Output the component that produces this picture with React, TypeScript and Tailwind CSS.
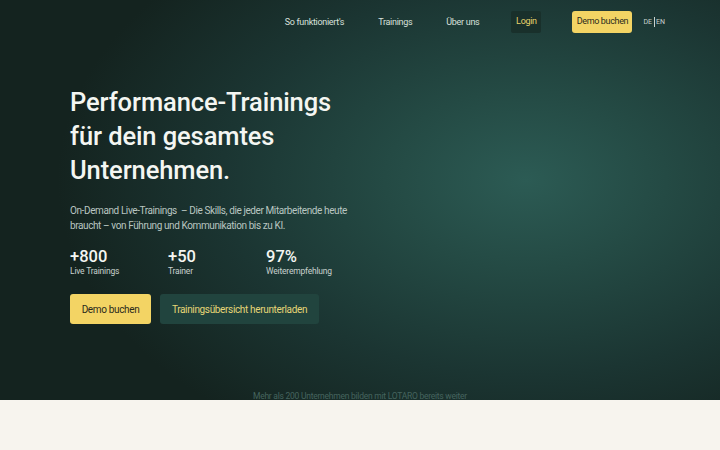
const navLinks = ["So funktioniert's", 'Trainings', 'Über uns'];

const stats = [
  { value: '+800', label: 'Live Trainings' },
  { value: '+50', label: 'Trainer' },
  { value: '97%', label: 'Weiterempfehlung' },
];

export default function App() {
  return (
    <div className="min-h-screen bg-[#f7f4ee] font-['Roboto',sans-serif]">
      <section className="relative h-[400px] bg-[radial-gradient(ellipse_65%_75%_at_73%_45%,#2c5b54_0%,#244a44_30%,#1b3532_65%,#14231f_100%)]">
        <nav className="flex items-center justify-end pr-[55px] pt-[11px]">
          <div className="flex items-center gap-[34px] text-[9px] tracking-[-0.3px] text-[#d8e0dc]">
            {navLinks.map((link) => (
              <a key={link} className="leading-none">
                {link}
              </a>
            ))}
          </div>
          <a className="ml-[32px] flex h-[22px] w-[30px] items-center justify-center rounded-[2px] bg-[#19302b] text-[9px] tracking-[-0.3px] text-[#e7d36a]">
            Login
          </a>
          <a className="ml-[31px] flex h-[22px] w-[60px] items-center justify-center rounded-[3px] bg-[#f3d464] text-[9px] tracking-[-0.35px] text-[#2a2a1c]">
            Demo buchen
          </a>
          <div className="ml-[11px] flex items-center text-[7px] text-[#c9d2ce]">
            <span>DE</span>
            <span className="mx-[1.5px] h-[10px] w-px bg-[#c9d2ce]" />
            <span>EN</span>
          </div>
        </nav>

        <div className="pl-[70px] pt-[52px]">
          <h1 className="text-[25.5px] font-medium leading-[34px] tracking-[-0.1px] text-[#f4f6f2]">
            Performance-Trainings
            <br />
            für dein gesamtes
            <br />
            Unternehmen.
          </h1>
          <p className="mt-[16px] whitespace-nowrap text-[10px] leading-[15px] tracking-[-0.4px] text-[#b9c6c1]">
            On-Demand Live-Trainings &nbsp;– Die Skills, die jeder Mitarbeitende heute
            <br />
            braucht – von Führung und Kommunikation bis zu KI.
          </p>
          <div className="mt-[15px] flex">
            {stats.map((s) => (
              <div key={s.label} className="w-[98px]">
                <div className="text-[16.5px] font-medium leading-[18px] text-[#f4f6f2]">{s.value}</div>
                <div className="text-[8.5px] leading-[11px] tracking-[-0.2px] text-[#c7d1cd]">{s.label}</div>
              </div>
            ))}
          </div>
          <div className="mt-[17px] flex gap-[9px]">
            <a className="flex h-[30px] w-[81px] items-center justify-center rounded-[3px] bg-[#f3d464] text-[10px] tracking-[-0.35px] text-[#2a2a1c]">
              Demo buchen
            </a>
            <a className="flex h-[30px] w-[159px] items-center justify-center rounded-[3px] bg-[#21443e] text-[10px] tracking-[-0.35px] text-[#e6d676]">
              Trainingsübersicht herunterladen
            </a>
          </div>
        </div>

        <p className="absolute bottom-[-3px] left-0 right-0 text-center text-[8.5px] tracking-[-0.25px] text-[#45645e]">
          Mehr als 200 Unternehmen bilden mit LOTARO bereits weiter
        </p>
      </section>
      <section className="h-[50px] bg-[#f7f4ee]" />
    </div>
  );
}
